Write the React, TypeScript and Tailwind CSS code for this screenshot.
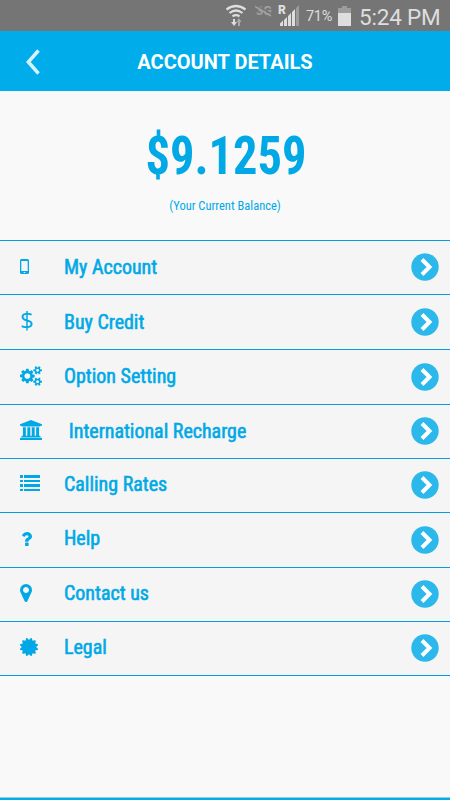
import React from 'react';

type IconProps = {
  viewBox: string;
  className: string;
  d: string;
};

function Icon({ viewBox, className, d }: IconProps) {
  return (
    <svg viewBox={viewBox} preserveAspectRatio="none" className={className} fill="currentColor">
      <path fillRule="evenodd" d={d} />
    </svg>
  );
}

const MOBILE =
  'M1.500 0h6q1.500 0 1.500 1.500v12q0 1.500 -1.500 1.500h-6q-1.500 0 -1.500 -1.500v-12q0 -1.500 1.500 -1.500zM1.300 2v10h6.400v-10zM3.700 12.900v1.200h1.600v-1.200z';
const COGS =
  'M896 896q0-106-75-181t-181-75-181 75-75 181 75 181 181 75 181-75 75-181zm768 512q0-52-38-90t-90-38-90 38-38 90q0 53 37.5 90.5t90.5 37.5 90.5-37.5 37.5-90.5zm0-1024q0-52-38-90t-90-38-90 38-38 90q0 53 37.5 90.5t90.5 37.5 90.5-37.5 37.5-90.5zm-384 421v185q0 10-7 19.500t-16 10.500l-155 24q-11 35-32 76 34 48 90 115 7 11 7 20 0 12-7 19-23 30-82.500 89.500t-78.500 59.500q-11 0-21-7l-115-90q-37 19-77 31-11 108-23 155-7 24-30 24h-186q-11 0-20-7.500t-10-17.500l-23-153q-34-10-75-31l-118 89q-7 7-20 7-11 0-21-8-144-133-144-160 0-9 7-19 10-14 41-53t47-61q-23-44-35-82l-152-24q-10-1-17-9.500t-7-19.500v-185q0-10 7-19.500t16-10.500l155-24q11-35 32-76-34-48-90-115-7-11-7-20 0-12 7-20 22-30 82-89t79-59q11 0 21 7l115 90q34-18 77-32 11-108 23-154 7-24 30-24h186q11 0 20 7.500t10 17.500l23 153q34 10 75 31l118-89q8-7 20-7 11 0 21 8 144 133 144 160 0 8-7 19-12 16-42 54t-45 60q23 48 34 82l152 23q10 2 17 10.500t7 19.500zm640 533v140q0 16-149 31-12 27-30 52 51 113 51 138 0 4-4 7-122 71-124 71-8 0-46-47t-52-68q-20 2-30 2t-30-2q-14 21-52 68t-46 47q-2 0-124-71-4-3-4-7 0-25 51-138-18-25-30-52-149-15-149-31v-140q0-16 149-31 13-29 30-52-51-113-51-138 0-4 4-7 4-2 35-20t59-34 30-16q8 0 46 46.500t52 67.500q20-2 30-2t30 2q51-71 92-112l6-2q4 0 124 70 4 3 4 7 0 25-51 138 17 23 30 52 149 15 149 31zm0-1024v140q0 16-149 31-12 27-30 52 51 113 51 138 0 4-4 7-122 71-124 71-8 0-46-47t-52-68q-20 2-30 2t-30-2q-14 21-52 68t-46 47q-2 0-124-71-4-3-4-7 0-25 51-138-18-25-30-52-149-15-149-31v-140q0-16 149-31 13-29 30-52-51-113-51-138 0-4 4-7 4-2 35-20t59-34 30-16q8 0 46 46.500t52 67.500q20-2 30-2t30 2q51-71 92-112l6-2q4 0 124 70 4 3 4 7 0 25-51 138 17 23 30 52 149 15 149 31z';
const BANK =
  'M960 0l960 384v128h-128q0 26-20.500 45t-48.500 19h-1526q-28 0-48.500-19t-20.500-45h-128v-128zM256 640h256v768h128v-768h256v768h128v-768h256v768h128v-768h256v768h59q28 0 48.500 19t20.500 45v64h-1664v-64q0-26 20.500-45t48.500-19h59zM1851 1600q28 0 48.500 19t20.500 45v128h-1920v-128q0-26 20.500-45t48.500-19z';
const LIST =
  'M0 0h3v3h-3zM4 0h16v3h-16zM0 5h3v2h-3zM4 5h16v2h-16zM0 9h3v3h-3zM4 9h16v3h-16zM0 14h3v2h-3zM4 14h16v2h-16z';
const QUESTION =
  'M1088 1256v240q0 16-12 28t-28 12h-240q-16 0-28-12t-12-28v-240q0-16 12-28t28-12h240q16 0 28 12t12 28zm316-600q0 54-15.500 101t-35 76.500-55 59.500-57.500 43.500-61 35.500q-41 23-68.500 65t-27.500 67q0 17-12 32.500t-28 15.500h-240q-15 0-25.500-18.500t-10.500-37.500v-45q0-83 65-156.500t143-108.500q59-27 84-56t25-76q0-42-46.500-74t-107.500-32q-65 0-108 29-35 25-107 115-13 16-31 16-12 0-25-8l-164-125q-13-10-15.500-25t5.500-28q160-266 464-266 80 0 161 31t146 83 106 127.500 41 158.500z';
const MARKER =
  'M1152 640q0-106-75-181t-181-75-181 75-75 181 75 181 181 75 181-75 75-181zm256 0q0 109-33 179l-364 774q-16 33-47.500 52t-67.500 19-67.500-19-46.500-52l-365-774q-33-70-33-179 0-212 150-362t362-150 362 150 150 362z';
const CERTIFICATE =
  'M1376 896l138 135q30 28 20 70-12 41-52 51l-188 48 53 186q12 41-19 70-29 31-70 19l-186-53-48 188q-10 40-51 52-12 2-19 2-31 0-51-22l-135-138-135 138q-28 30-70 20-41-11-51-52l-48-188-186 53q-41 12-70-19-31-29-19-70l53-186-188-48q-40-10-52-51-10-42 20-70l138-135-138-135q-30-28-20-70 12-41 52-51l188-48-53-186q-12-41 19-70 29-31 70-19l186 53 48-188q10-41 51-51 41-12 70 19l135 139 135-139q29-30 70-19 41 10 51 51l48 188 186-53q41-12 70 19 31 29 19 70l-53 186 188 48q40 10 52 51 10 42-20 70z';

const rows = [
  { label: 'My Account', height: 'h-[54px]', text: 'pt-px', icon: <Icon viewBox="0 0 9 15" className="h-[15px] w-[9px]" d={MOBILE} /> },
  { label: 'Buy Credit', height: 'h-[55px]', text: 'pt-px', icon: <span className="-mt-[3px] block font-['Open_Sans'] text-[24px] leading-[24px]">$</span> },
  { label: 'Option Setting', height: 'h-[55px]', text: 'pb-px', icon: <Icon viewBox="0 0 1920 1792" className="h-[20px] w-[22px]" d={COGS} /> },
  { label: 'International Recharge', height: 'h-[54px]', text: 'pt-px pl-[5px]', icon: <Icon viewBox="0 0 1920 1792" className="mb-px h-[20px] w-[22px]" d={BANK} /> },
  { label: 'Calling Rates', height: 'h-[54px]', text: 'pb-px', icon: <Icon viewBox="0 0 20 16" className="mb-[3px] h-[16px] w-[20px]" d={LIST} /> },
  { label: 'Help', height: 'h-[55px]', text: 'pb-[3px]', icon: <Icon viewBox="388 256 1016 1280" className="mb-px ml-px h-[14px] w-[11px]" d={QUESTION} /> },
  { label: 'Contact us', height: 'h-[54px]', text: 'pb-px', icon: <Icon viewBox="384 128 1024 1536" className="mb-[2px] h-[18px] w-[12px]" d={MARKER} /> },
  { label: 'Legal', height: 'h-[54px]', text: 'pb-px', icon: <Icon viewBox="0 128 1536 1536" className="mb-[2px] h-[18px] w-[18px]" d={CERTIFICATE} /> },
];

function StatusBar() {
  return (
    <div className="flex h-[31px] items-center bg-[#757575] pl-[225px] text-[#dedede]">
      <svg viewBox="0 0 22 24" className="h-[24px] w-[22px]" fill="none" stroke="currentColor" strokeWidth="2.200">
        <path d="M1.500 5.500q9.500 -7 19 0M4.500 9q6.500 -5 13 0M7.500 12.300q3.500 -2.500 7 0" />
        <path d="M9 15v4" strokeWidth="2" />
        <path d="M6 18h6l-3 4z" fill="currentColor" stroke="none" />
        <path d="M14 22v-4" stroke="#aaa" strokeWidth="2" />
        <path d="M11.500 18h5l-2.500 -4z" fill="#aaa" stroke="none" />
      </svg>
      <div className="relative mb-[10px] ml-[8px] h-[12px] w-[17px] text-[#a0a0a0]">
        <span className="block pl-px text-[12.500px] leading-[12px] font-bold">3G</span>
        <svg viewBox="0 0 17 12" className="absolute inset-0 h-[12px] w-[17px]">
          <path d="M1 0L17 9" stroke="#757575" strokeWidth="1.500" />
          <path d="M0 1.500L16 11" stroke="#a0a0a0" strokeWidth="1.500" />
        </svg>
      </div>
      <svg viewBox="0 0 22 21" className="ml-[6px] h-[21px] w-[22px] overflow-visible" fill="currentColor">
        <path d="M2 18.500l3-3v5.500h-3zM6 15l3-3v9h-3zM10 11l3-3v13h-3zM14 7l3-3v17h-3z" />
        <path d="M18 3l3-3v21h-3z" fill="#9c9c9c" />
        <text x="0" y="9" fontFamily="Roboto" fontSize="12" fontWeight="900">R</text>
      </svg>
      <span className="ml-[6px] w-[29px] pt-[3px] text-[14.500px] leading-none tracking-[-0.3px]">71%</span>
      <svg viewBox="0 0 13 20" className="ml-[3px] h-[20px] w-[13px]" fill="currentColor">
        <path d="M4 0h5v2h4v6h-13v-6h4z" fill="#9c9c9c" />
        <path d="M0 7h13v13h-13z" />
      </svg>
      <span className="ml-[8px] whitespace-nowrap pt-[3px] text-[22.500px] leading-none tracking-[-0.2px]">5:24 PM</span>
    </div>
  );
}

export default function App() {
  return (
    <div className="flex h-[800px] w-[450px] flex-col overflow-hidden bg-[#f9f9f9] font-[Roboto,sans-serif] text-[#00a9e6]">
      <StatusBar />
      <header className="relative flex h-[60px] items-center justify-center bg-[#00ace9] text-white">
        <svg viewBox="0 0 14 26" className="absolute top-[18px] left-[26px] h-[26px] w-[14px]" fill="none" stroke="#d5f2fc" strokeWidth="3.500">
          <path d="M12.500 1.500L2.300 13l10.200 11.500" />
        </svg>
        <h1 className="pt-[2px] text-[20px] leading-none font-bold">ACCOUNT DETAILS</h1>
      </header>

      <section className="flex h-[149px] flex-col items-center font-stretch-[75%]">
        <div className="mt-[38px] scale-x-[0.915] pl-[2px] text-[53px] leading-[54px] font-bold">$9.1259</div>
        <div className="mt-[16px] text-[12.500px] leading-[14px]">(Your Current Balance)</div>
      </section>

      <ul className="border-t border-[#079be0] bg-[#f5f5f5]">
        {rows.map((row) => (
          <li key={row.label} className={`flex items-center border-b border-[#079be0] pr-[11px] pb-px pl-[20px] ${row.height}`}>
            <div className="w-[44px] pb-px">{row.icon}</div>
            <span className={`flex-1 origin-left scale-x-[0.95] text-[21px] leading-none font-stretch-[75%] [-webkit-text-stroke:0.6px_currentColor] ${row.text}`}>
              {row.label}
            </span>
            <svg viewBox="0 0 28 28" className="h-[28px] w-[28px]">
              <circle cx="14" cy="14" r="13.700" fill="#2cb8eb" />
              <path d="M11 6.500l7.500 7.500l-7.500 7.500" fill="none" stroke="#fff" strokeWidth="4" />
            </svg>
          </li>
        ))}
      </ul>

      <div className="mt-auto h-[3px] border-t border-[#9cc9dc] bg-[#00ace9]" />
    </div>
  );
}
